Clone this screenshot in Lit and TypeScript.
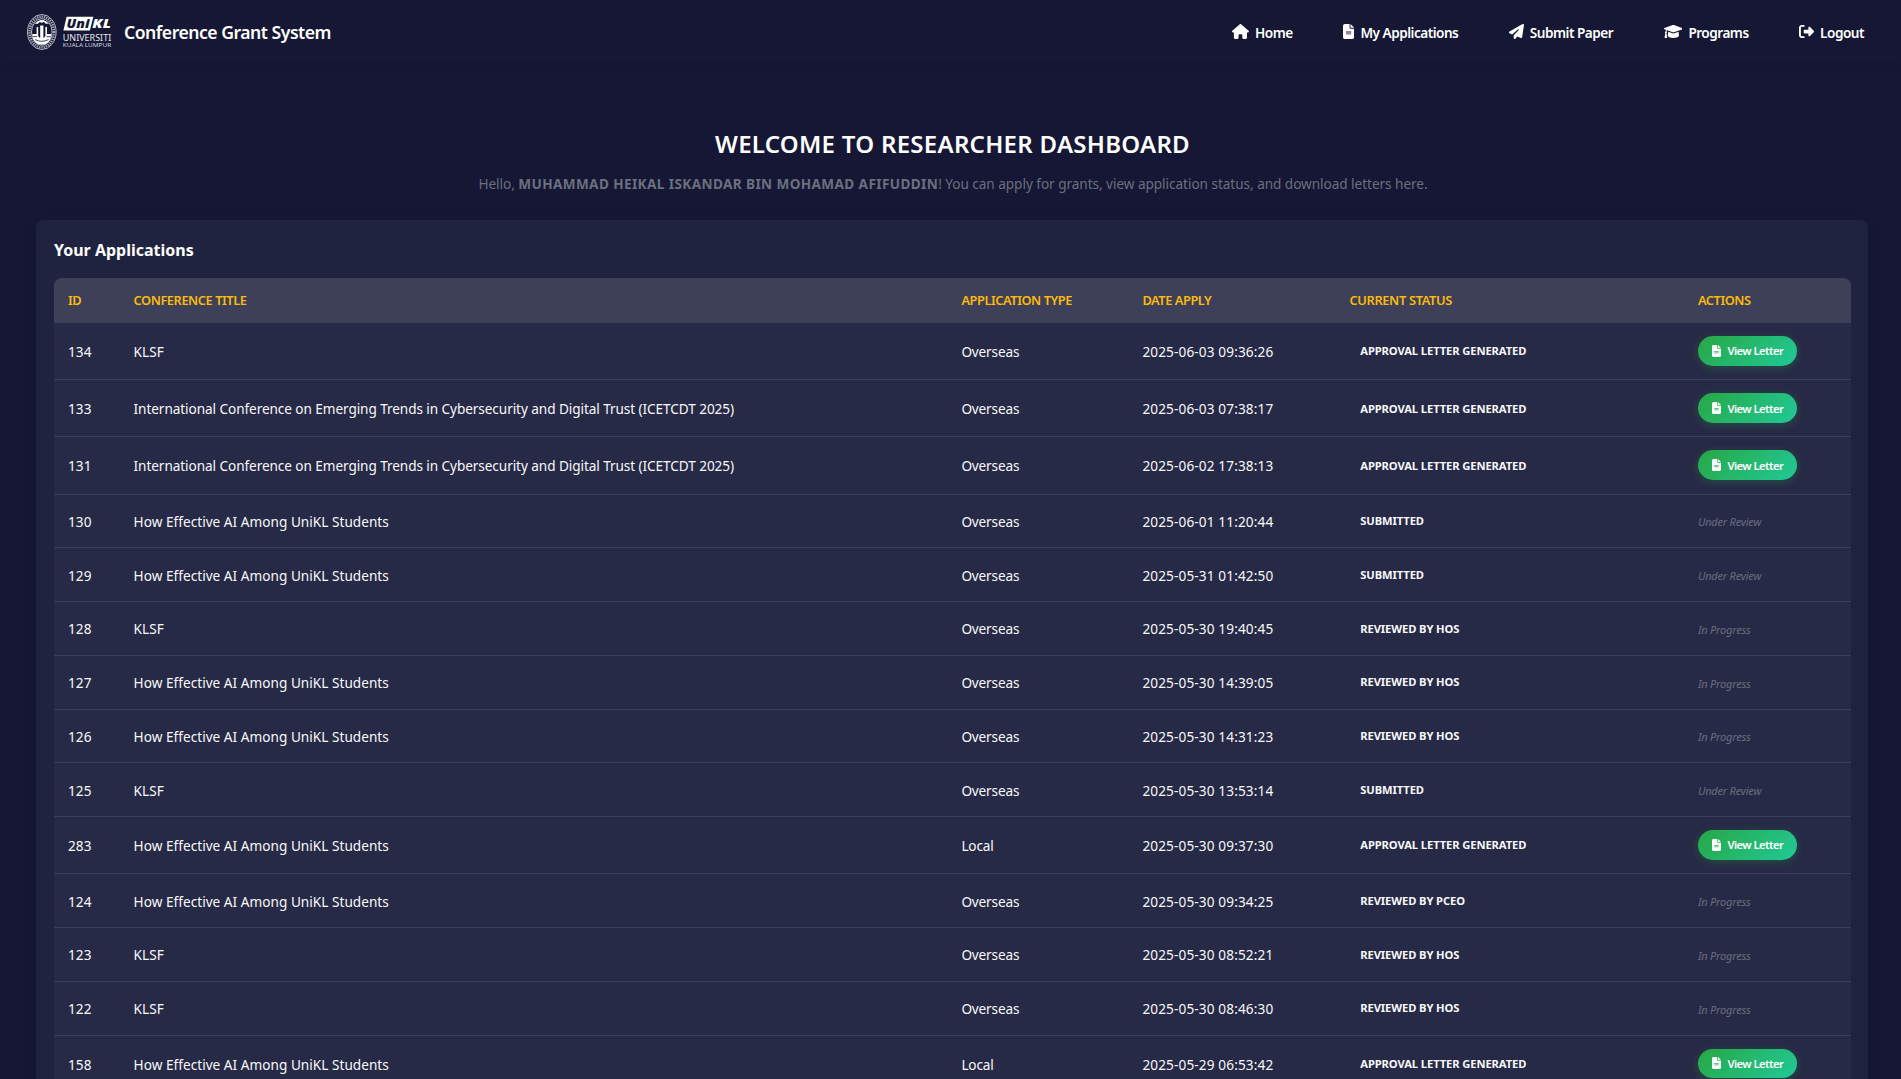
import { LitElement, html, css, svg } from "lit";
import { customElement, property } from "lit/decorators.js";

type Status = "APPROVAL LETTER GENERATED" | "SUBMITTED" | "REVIEWED BY HOS" | "REVIEWED BY PCEO";
interface Application {
  id: number;
  title: string;
  type: string;
  date: string;
  status: Status;
}

const ICETCDT = "International Conference on Emerging Trends in Cybersecurity and Digital Trust (ICETCDT 2025)";
const AI = "How Effective AI Among UniKL Students";

const row = (id: number, title: string, type: string, date: string, status: Status): Application => ({
  id, title, type, date, status,
});

const APPLICATIONS: Application[] = [
  row(134, "KLSF", "Overseas", "2025-06-03 09:36:26", "APPROVAL LETTER GENERATED"),
  row(133, ICETCDT, "Overseas", "2025-06-03 07:38:17", "APPROVAL LETTER GENERATED"),
  row(131, ICETCDT, "Overseas", "2025-06-02 17:38:13", "APPROVAL LETTER GENERATED"),
  row(130, AI, "Overseas", "2025-06-01 11:20:44", "SUBMITTED"),
  row(129, AI, "Overseas", "2025-05-31 01:42:50", "SUBMITTED"),
  row(128, "KLSF", "Overseas", "2025-05-30 19:40:45", "REVIEWED BY HOS"),
  row(127, AI, "Overseas", "2025-05-30 14:39:05", "REVIEWED BY HOS"),
  row(126, AI, "Overseas", "2025-05-30 14:31:23", "REVIEWED BY HOS"),
  row(125, "KLSF", "Overseas", "2025-05-30 13:53:14", "SUBMITTED"),
  row(283, AI, "Local", "2025-05-30 09:37:30", "APPROVAL LETTER GENERATED"),
  row(124, AI, "Overseas", "2025-05-30 09:34:25", "REVIEWED BY PCEO"),
  row(123, "KLSF", "Overseas", "2025-05-30 08:52:21", "REVIEWED BY HOS"),
  row(122, "KLSF", "Overseas", "2025-05-30 08:46:30", "REVIEWED BY HOS"),
  row(158, AI, "Local", "2025-05-29 06:53:42", "APPROVAL LETTER GENERATED"),
];

const ICONS: Record<string, { w: number; d: string }> = {
  home: {
    w: 576,
    d: "M575.8 255.5c0 18-15 32.1-32 32.1h-32l.7 160.2c0 2.7-.2 5.4-.5 8.1V472c0 22.1-17.9 40-40 40H456c-1.1 0-2.2 0-3.3-.1c-1.4 .1-2.8 .1-4.2 .1H416 392c-22.1 0-40-17.9-40-40V448 384c0-17.7-14.3-32-32-32H256c-17.7 0-32 14.3-32 32v64 24c0 22.1-17.9 40-40 40H160 128.1c-1.5 0-3-.1-4.5-.2c-1.2 .1-2.4 .2-3.6 .2H104c-22.1 0-40-17.9-40-40V360c0-.9 0-1.9 .1-2.8V287.6H32c-18 0-32-14-32-32.1c0-9 3-17 10-24L266.4 8c7-7 15-8 22-8s15 2 21 7L564.8 231.5c8 7 12 15 11 24z",
  },
  file: {
    w: 384,
    d: "M64 0C28.7 0 0 28.7 0 64V448c0 35.3 28.7 64 64 64H320c35.3 0 64-28.7 64-64V160H256c-17.7 0-32-14.3-32-32V0H64zM256 0V128H384L256 0zM112 256H272c8.8 0 16 7.2 16 16s-7.2 16-16 16H112c-8.8 0-16-7.2-16-16s7.2-16 16-16zm0 64H272c8.8 0 16 7.2 16 16s-7.2 16-16 16H112c-8.8 0-16-7.2-16-16s7.2-16 16-16z",
  },
  plane: {
    w: 512,
    d: "M498.1 5.6c10.1 7 15.4 19.1 13.5 31.2l-64 416c-1.5 9.7-7.4 18.2-16 23s-18.9 5.4-28 1.6L284 427.7l-68.5 74.1c-8.9 9.7-22.9 12.9-35.2 8.1S160 493.2 160 480V396.4c0-4 1.5-7.8 4.2-10.7L331.8 202.8c5.8-6.3 5.6-16-.4-22s-15.7-6.4-22-.7L106 360.8 17.7 316.6C7.1 311.3 .3 300.7 0 288.9s5.9-22.8 16.1-28.7l448-256c10.7-6.1 23.9-5.5 34 1.4z",
  },
  cap: {
    w: 640,
    d: "M623.1 136.9l-282.7-101.2c-13.73-4.91-28.7-4.91-42.43 0L16.05 136.9C6.438 140.4 0 149.6 0 160s6.438 19.65 16.05 23.09L76.07 204.6c-11.89 15.8-20.26 34.16-24.55 53.95C40.05 263.4 32 274.8 32 288c0 9.953 4.814 18.49 11.94 24.36l-24.83 149C17.48 471.1 25 480 34.89 480H93.11c9.887 0 17.41-8.879 15.78-18.63l-24.83-149C91.19 306.5 96 297.1 96 288c0-10.29-5.174-19.03-12.72-24.89c4.252-17.76 12.88-33.82 24.94-47.03l190.6 68.23c13.73 4.91 28.7 4.91 42.43 0l282.7-101.2C633.6 179.6 640 170.4 640 160S633.6 140.4 623.1 136.9zM351.1 314.4C341.7 318.1 330.9 320 320 320c-10.92 0-21.69-1.867-32-5.555L142.8 262.5L128 405.3C128 446.6 213.1 480 320 480c105.1 0 192-33.4 192-74.67l-14.78-142.9L351.1 314.4z",
  },
  logout: {
    w: 512,
    d: "M377.9 105.9L500.7 228.7c7.2 7.2 11.3 17.1 11.3 27.3s-4.1 20.1-11.3 27.3L377.9 406.1c-6.4 6.4-15 9.9-24 9.9c-18.7 0-33.9-15.2-33.9-33.9l0-62.1-128 0c-17.7 0-32-14.3-32-32l0-64c0-17.7 14.3-32 32-32l128 0 0-62.1c0-18.7 15.2-33.9 33.9-33.9c9 0 17.6 3.6 24 9.9zM160 96L96 96c-17.7 0-32 14.3-32 32l0 256c0 17.7 14.3 32 32 32l64 0c17.7 0 32 14.3 32 32s-14.3 32-32 32l-64 0c-53 0-96-43-96-96L0 128C0 75 43 32 96 32l64 0c17.7 0 32 14.3 32 32s-14.3 32-32 32z",
  },
};

@customElement("fa-icon")
export class FaIcon extends LitElement {
  @property() name = "home";
  @property({ type: Number }) size = 15;

  static styles = css`
    :host { display: block; flex: none; line-height: 0; }
    .glyph { display: block; fill: currentColor; }
  `;

  render() {
    const icon = ICONS[this.name];
    return html`<svg class="glyph" width=${(this.size * icon.w) / 512} height=${this.size}
      viewBox="0 0 ${icon.w} 512"><path d=${icon.d}></path></svg>`;
  }
}

@customElement("unikl-logo")
export class UniklLogo extends LitElement {
  static styles = css`
    :host { display: block; flex: none; }
    .logo { display: block; }
    .ring { fill: none; stroke: #c9cad6; stroke-width: 0.9; }
    .letters { fill: none; stroke: #a9abbd; stroke-width: 2.6; stroke-dasharray: 1.3 1; }
    .white { fill: #fff; }
    .uni { font: italic 900 13px "Noto Sans", sans-serif; fill: #151733; }
    .kl { font: italic 900 13px "Noto Sans", sans-serif; fill: #fff; }
    .name { font: 400 9px "Noto Sans", sans-serif; fill: #e6e7ee; }
    .city { font: 400 6px "Noto Sans", sans-serif; fill: #d3d4df; }
    .beam { fill: none; stroke: #151733; stroke-width: 0.8; }
  `;

  render() {
    return html`<svg class="logo" width="86" height="38" viewBox="26 13 86 38">
      <ellipse class="ring" cx="41.8" cy="32" rx="14.3" ry="17.5"></ellipse>
      <ellipse class="letters" cx="41.8" cy="32" rx="12.2" ry="15.3"></ellipse>
      <ellipse class="ring" cx="41.8" cy="32" rx="10.3" ry="13.3"></ellipse>
      <path class="white" d="M34 24.5 Q41.8 15.5 49.6 24.5 L47.8 23.6 L46 23.9 L44 22 L41.8 22.8 L39.6 22 L37.6 23.9 L35.8 23.6Z"></path>
      <path class="white" d="M32.3 34 H36.6 V27 h1.6 V36 l2 2.3 V25.6 h3.2 V38.3 l2 -2.3 V27 h1.6 V34 H51.3 Q50.6 44.6 41.8 44.8 Q33 44.6 32.3 34Z"></path>
      ${svg`<path class="beam" d="M33 36.6h4M46.6 36.6h4M35 39.6q6.8 3.4 13.6 0"></path>`}
      <path class="white" d="M66.6 16.7H93.3L89.9 30.6H63.4Z"></path>
      <text class="uni" x="66.6" y="28.3" textLength="23" lengthAdjust="spacingAndGlyphs">Uni</text>
      <text class="kl" x="92.3" y="28.3" textLength="18.5" lengthAdjust="spacingAndGlyphs">KL</text>
      <text class="name" x="62.8" y="41.3" textLength="48.4" lengthAdjust="spacingAndGlyphs">UNIVERSITI</text>
      <text class="city" x="62.8" y="47.3" textLength="48.4" lengthAdjust="spacingAndGlyphs">KUALA LUMPUR</text>
    </svg>`;
  }
}

@customElement("app-root")
export class AppRoot extends LitElement {
  static styles = css`
    :host {
      display: block;
      height: 100vh;
      overflow: hidden;
      background: #151734;
      color: #fff;
      font-family: "Segoe UI", "Noto Sans", sans-serif;
      font-size: 13.6px;
    }
    .topbar {
      display: flex;
      align-items: center;
      justify-content: space-between;
      box-sizing: border-box;
      height: 63px;
      padding: 0 37px 0 26px;
      box-shadow: 0 2px 8px rgba(0, 0, 0, 0.1);
    }
    .brand { display: flex; align-items: center; gap: 12px; }
    .brand-name { font-size: 17.6px; font-weight: 600; letter-spacing: -0.49px; line-height: 24px; }
    .nav { display: flex; gap: 50.5px; padding-bottom: 1px; }
    .link { display: flex; align-items: center; gap: 6px; font-weight: 600; letter-spacing: -0.5px; line-height: 20px; }
    .link-text { padding-top: 4px; }
    .main { padding: 64px 33px 0 36px; }
    .heading {
      margin: 0;
      padding-left: 1px;
      font-size: 24px;
      font-weight: 600;
      letter-spacing: 0.28px;
      line-height: 34px;
      text-align: center;
    }
    .lead { margin: 13px 0 0; padding-left: 2px; text-align: center; color: #6c6f7f; line-height: 20px; letter-spacing: -0.045px; }
    .user { font-weight: 700; letter-spacing: 0.385px; }
    .card {
      margin-top: 26px;
      padding: 18px 17px 40px 18px;
      border-radius: 8px;
      background: #202340;
      box-shadow: 0 4px 15px rgba(0, 0, 20, 0.1);
    }
    .card-title { margin: 0; font-size: 16px; font-weight: 700; line-height: 24px; }
    .table {
      width: 100%;
      margin-top: 16px;
      table-layout: fixed;
      border-collapse: separate;
      border-spacing: 0;
      border-radius: 8px;
      overflow: hidden;
      background: #272a46;
    }
    .th {
      box-sizing: border-box;
      height: 45px;
      padding: 0 0 2px 13.9px;
      background: #3e4059;
      color: #fbbb0a;
      font-size: 12.8px;
      font-weight: 600;
      letter-spacing: -0.43px;
      text-align: left;
    }
    .id { width: 65.7px; }
    .type { width: 181px; }
    .date { width: 207px; }
    .status { width: 348.5px; letter-spacing: -0.32px; }
    .actions { width: 167px; }
    .td {
      box-sizing: border-box;
      height: 53.75px;
      padding: 1px 0 0 13.9px;
      border-bottom: 1px solid #3c3e57;
      color: #f8f8fb;
      white-space: nowrap;
      letter-spacing: 0.03px;
    }
    .tall .td { height: 57.2px; }
    .td.long { letter-spacing: -0.075px; }
    .td.when { letter-spacing: 0.13px; }
    .td.kind { letter-spacing: -0.16px; }
    .state {
      display: block;
      padding: 0 0 1.5px 10.9px;
      font-size: 11.2px;
      font-weight: 700;
      letter-spacing: -0.1px;
    }
    .pending { display: block; padding-top: 1px; color: #6a6c7d; font-size: 11px; font-style: italic; letter-spacing: -0.2px; }
    .button {
      display: flex;
      align-items: center;
      gap: 6.5px;
      box-sizing: border-box;
      width: 99.3px;
      height: 29.5px;
      margin-bottom: 1.5px;
      padding: 0 0 0 14px;
      border: 0;
      border-radius: 15px;
      background: linear-gradient(135deg, #28a745, #20c997);
      box-shadow: 0 2px 8px rgba(40, 167, 69, 0.3);
      color: #fff;
      font-family: inherit;
      font-size: 11.2px;
      font-weight: 600;
      letter-spacing: -0.53px;
    }
  `;

  private link(icon: string, label: string) {
    return html`<a class="link"><fa-icon name=${icon}></fa-icon><span class="link-text">${label}</span></a>`;
  }

  private action(status: Status) {
    if (status === "APPROVAL LETTER GENERATED") {
      return html`<button class="button"><fa-icon name="file" size="12"></fa-icon><span>View Letter</span></button>`;
    }
    return html`<span class="pending">${status === "SUBMITTED" ? "Under Review" : "In Progress"}</span>`;
  }

  render() {
    return html`
      <header class="topbar">
        <div class="brand"><unikl-logo></unikl-logo><span class="brand-name">Conference Grant System</span></div>
        <nav class="nav">
          ${this.link("home", "Home")} ${this.link("file", "My Applications")} ${this.link("plane", "Submit Paper")}
          ${this.link("cap", "Programs")} ${this.link("logout", "Logout")}
        </nav>
      </header>
      <main class="main">
        <h1 class="heading">WELCOME TO RESEARCHER DASHBOARD</h1>
        <p class="lead">Hello, <b class="user">MUHAMMAD HEIKAL ISKANDAR BIN MOHAMAD AFIFUDDIN</b>! You can apply for grants, view application status, and download letters here.</p>
        <section class="card">
          <h2 class="card-title">Your Applications</h2>
          <table class="table">
            <thead>
              <tr>
                <th class="th id">ID</th>
                <th class="th">CONFERENCE TITLE</th>
                <th class="th type">APPLICATION TYPE</th>
                <th class="th date">DATE APPLY</th>
                <th class="th status">CURRENT STATUS</th>
                <th class="th actions">ACTIONS</th>
              </tr>
            </thead>
            <tbody>
              ${APPLICATIONS.map(
                (a) => html`<tr class=${a.status === "APPROVAL LETTER GENERATED" ? "tall" : ""}>
                  <td class="td when">${a.id}</td>
                  <td class=${a.title.length > 60 ? "td long" : "td"}>${a.title}</td>
                  <td class="td kind">${a.type}</td>
                  <td class="td when">${a.date}</td>
                  <td class="td"><span class="state">${a.status}</span></td>
                  <td class="td">${this.action(a.status)}</td>
                </tr>`
              )}
            </tbody>
          </table>
        </section>
      </main>
    `;
  }
}
